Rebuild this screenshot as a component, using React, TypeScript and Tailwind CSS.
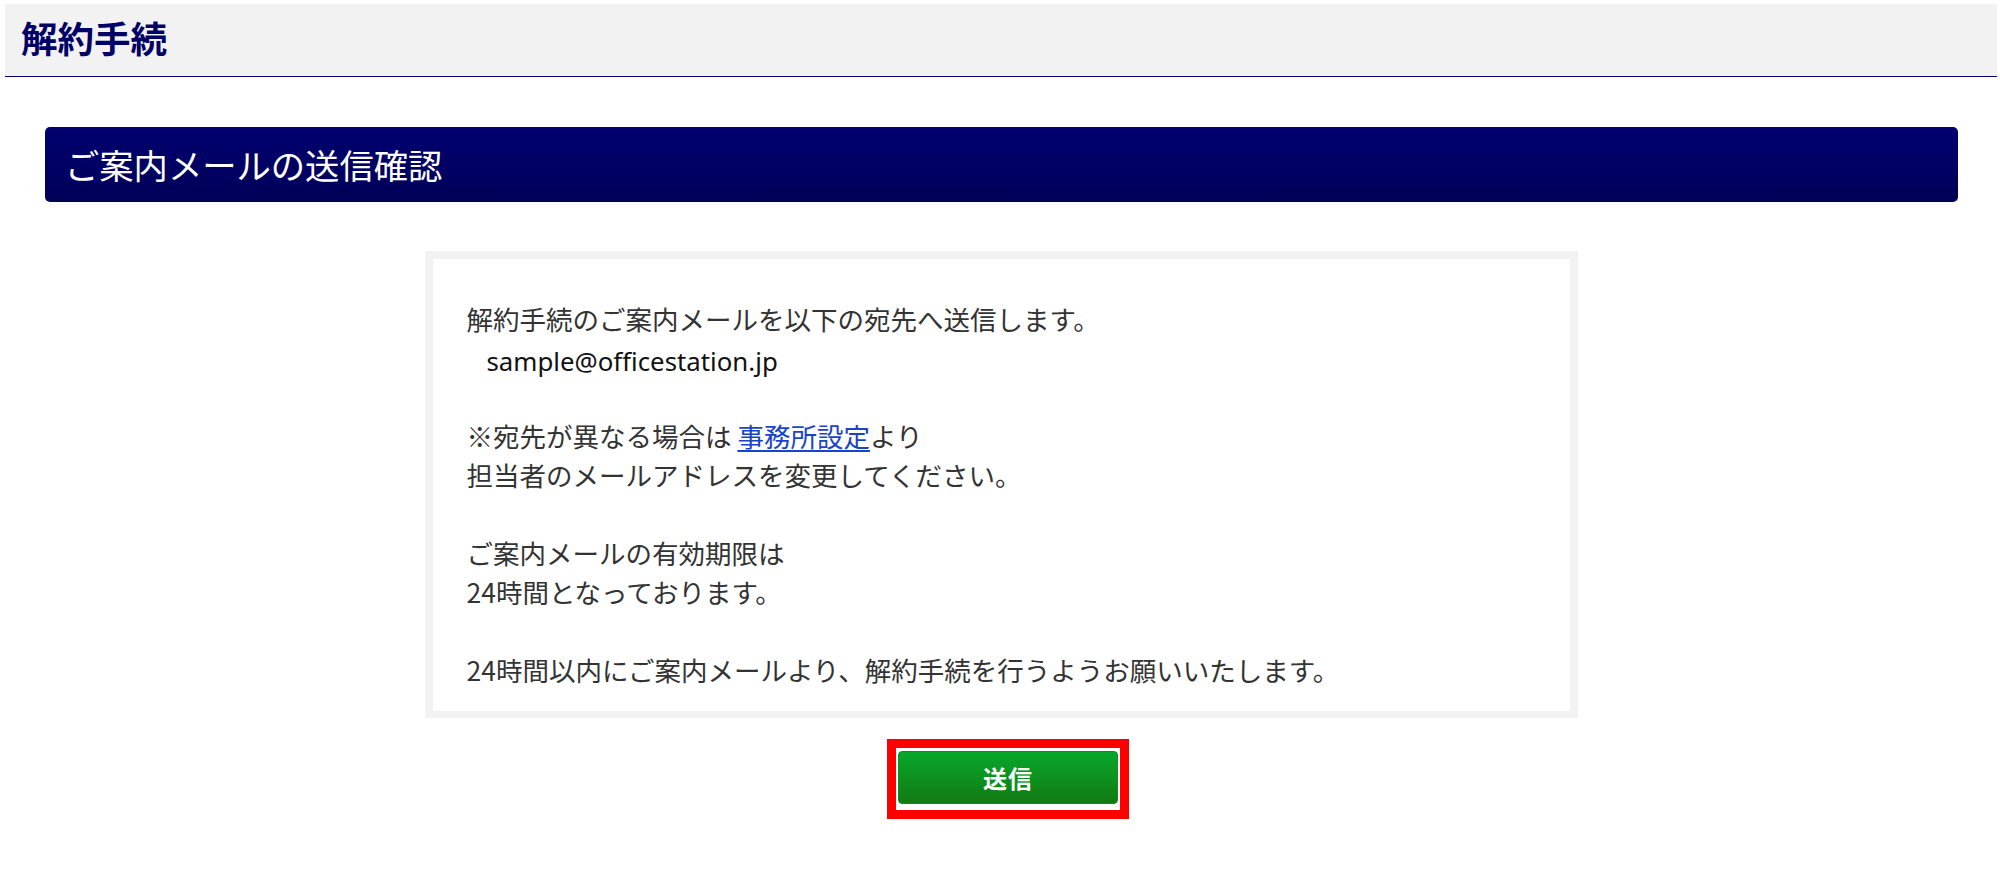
import React from 'react';

const jp = { fontFamily: '"Noto Sans CJK JP", "Noto Sans", sans-serif' };
const latin = { fontFamily: '"Noto Sans", "Noto Sans CJK JP", sans-serif' };

export default function App() {
    return (
        <div className="min-h-screen bg-white pl-[5px] pr-[3px] pt-[4px]" style={jp}>
            <header className="flex h-[73px] items-center border-b border-[#000066] bg-[#f2f2f2] pb-[4px] pl-[16px]">
                <h1 className="text-[36.5px] font-bold leading-none text-[#000066]">解約手続</h1>
            </header>

            <div className="ml-[40px] mr-[39px] mt-[50px] flex h-[75px] items-center rounded-[5px] bg-gradient-to-b from-[#000070] to-[#000058] pl-[20px]">
                <h2 className="text-[34.3px] font-normal leading-none text-white">ご案内メールの送信確認</h2>
            </div>

            <div className="mx-auto mt-[49px] w-[1153px] border-[8px] border-b-[7px] border-[#f2f2f2] bg-white pb-[22px] pl-[34px] pt-[40px] text-[26.5px] leading-[39px] text-[#333333]">
                <p>解約手続のご案内メールを以下の宛先へ送信します。</p>
                <p className="pl-[20px] pt-[4px] text-[25.8px] text-[#111111]" style={latin}>
                    sample@officestation.jp
                </p>
                <div className="h-[35px]" />
                <p>
                    ※宛先が異なる場合は{' '}
                    <a href="#" className="text-[#1a44c8] underline underline-offset-[3px]">
                        事務所設定
                    </a>
                    より
                </p>
                <p>担当者のメールアドレスを変更してください。</p>
                <p>&nbsp;</p>
                <p>ご案内メールの有効期限は</p>
                <p>24時間となっております。</p>
                <p>&nbsp;</p>
                <p>24時間以内にご案内メールより、解約手続を行うようお願いいたします。</p>
            </div>

            <div className="mt-[21px] flex justify-center pl-[14px]">
                <div className="border-[9px] border-[#ff0000] bg-white px-[2px] pb-[6px] pt-[3px]">
                    <button className="flex h-[53px] w-[220px] items-center justify-center rounded-[4px] border border-[#0c8f1f] bg-gradient-to-b from-[#06a82b] to-[#117a12] text-[24px] font-bold tracking-[1px] text-white">
                        送信
                    </button>
                </div>
            </div>
        </div>
    );
}
